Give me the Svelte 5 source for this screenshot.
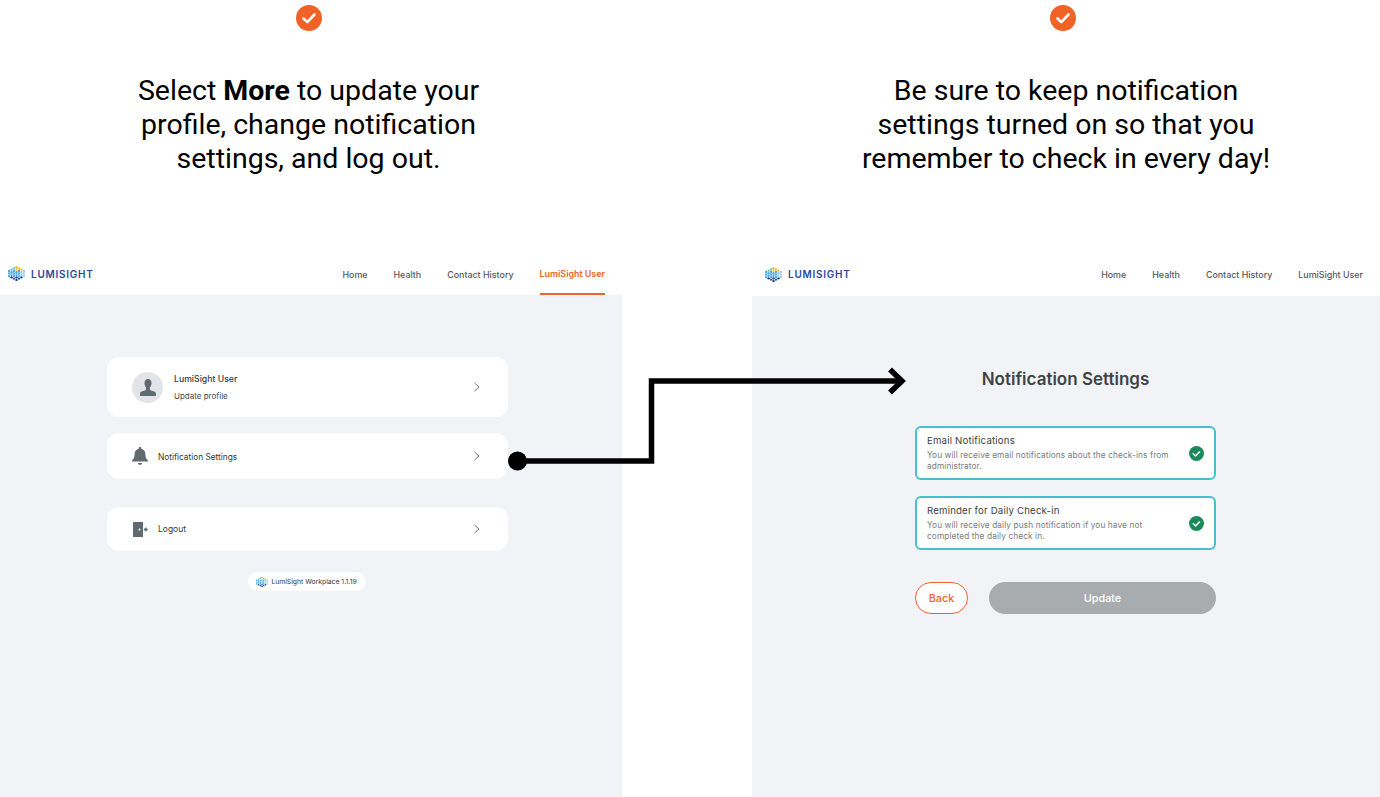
<script>
  // Two-step help slide: "More" menu on the left, notification settings on the right.
  const navLeft = ['Home', 'Health', 'Contact History', 'LumiSight User'];

  // hexagon cluster of dots for the logo mark
  const dots = [];
  for (let c = 0; c < 7; c++) {
    for (let r = 0; r < 7; r++) {
      const x = 1 + c * 2.33;
      const y = 0.8 + r * 2.4 + (c % 2) * 1.2;
      if (Math.abs(y - 8) > 8.2 - Math.abs(x - 8) * 0.55) continue;
      let fill = '#4aa8e0';
      if (y < 5 && x > 6) fill = '#f2b632';
      else if (y < 5) fill = '#6fc0b8';
      else if (y > 11) fill = c % 2 ? '#1e3f8f' : '#2d5fb0';
      else if (x > 11) fill = '#9ccdea';
      dots.push({ x, y, fill });
    }
  }
</script>

{#snippet logoMark(size)}
  <svg width={size} height={size} viewBox="0 0 16 16" aria-hidden="true">
    {#each dots as d}
      <circle cx={d.x} cy={d.y} r="1.1" fill={d.fill} />
    {/each}
  </svg>
{/snippet}

{#snippet tick()}
  <svg class="tick" width="26" height="26" viewBox="0 0 26 26" aria-hidden="true">
    <circle cx="13" cy="13" r="13" fill="#f26125" />
    <path d="M7.5 13.5l3.8 3.6 7.2-7.6" fill="none" stroke="#fff" stroke-width="2.6" stroke-linecap="round" stroke-linejoin="round" />
  </svg>
{/snippet}

{#snippet header(active)}
  <header class="bar">
    <div class="brand">{@render logoMark(17)}<span>LUMISIGHT</span></div>
    <nav>
      {#each navLeft as item}
        <span class="link" class:active={active && item === 'LumiSight User'}>{item}</span>
      {/each}
    </nav>
  </header>
{/snippet}

{#snippet chevron()}
  <svg class="chev" width="8" height="10" viewBox="0 0 8 10" aria-hidden="true">
    <path d="M1.5 1l4.500 4-4.500 4" fill="none" stroke="#6b7075" stroke-width="1" />
  </svg>
{/snippet}

{#snippet okMark()}
  <svg width="15" height="15" viewBox="0 0 14 14" aria-hidden="true">
    <circle cx="7" cy="7" r="7" fill="#1b8a5a" />
    <path d="M4 7.300l2.100 2 3.800-4" fill="none" stroke="#fff" stroke-width="1.400" stroke-linecap="round" stroke-linejoin="round" />
  </svg>
{/snippet}

<div class="slide">
  <section class="col left">
    <div class="top">
      {@render tick()}
      <p class="cap">Select <b>More</b> to update your<br />profile, change notification<br />settings, and log out.</p>
    </div>
    {@render header(true)}
    <div class="panel">
      <div class="menu">
        <div class="card profile">
          <span class="avatar">
            <svg width="16" height="17" viewBox="0 0 16 17" aria-hidden="true">
              <path d="M8 0c2.300 0 3.500 1.700 3.500 4 0 1.800-.6 3.500-1.600 4.600v1.600c0 .8 1 1.200 3 1.900 1.800.6 3 1.200 3 2.400V17H0v-2.500c0-1.200 1.200-1.800 3-2.400 2-.7 3-1.100 3-1.900V8.600C5.100 7.500 4.500 5.800 4.500 4 4.500 1.700 5.700 0 8 0z" fill="#5f6b70" />
            </svg>
          </span>
          <div class="who">
            <strong>LumiSight User</strong>
            <small>Update profile</small>
          </div>
          {@render chevron()}
        </div>
        <div class="card notif">
          <svg class="ico" width="16" height="18" viewBox="0 0 16 18" aria-hidden="true">
            <path d="M8 0c.8 0 1.300.5 1.300 1.300v.5c2.600.6 4.100 2.700 4.100 5.400 0 3.200.8 4.500 2.600 6.300v1H0v-1c1.800-1.800 2.600-3.100 2.600-6.300 0-2.700 1.500-4.800 4.100-5.400v-.5C6.700.5 7.200 0 8 0zM6 16h4c0 1.100-.9 2-2 2s-2-.9-2-2z" fill="#5f6b70" />
          </svg>
          <span class="label">Notification Settings</span>
          {@render chevron()}
        </div>
        <div class="card logout">
          <svg class="ico" width="15" height="15" viewBox="0 0 15 15" aria-hidden="true">
            <path d="M0 0h10v15H0z" fill="#5f6b70" />
            <circle cx="6.500" cy="7.500" r="1" fill="#fff" />
            <path d="M11 6.500h1.500V5L15 7.500 12.500 10V8.500H11z" fill="#5f6b70" />
          </svg>
          <span class="label">Logout</span>
          {@render chevron()}
        </div>
        <div class="pill">{@render logoMark(12)}<span>LumiSight Workplace 1.1.19</span></div>
      </div>
    </div>
  </section>

  <section class="col right">
    <div class="top">
      {@render tick()}
      <p class="cap">Be sure to keep notification<br />settings turned on so that you<br />remember to check in every day!</p>
    </div>
    {@render header(false)}
    <div class="panel">
      <h2>Notification Settings</h2>
      <div class="opts">
        <div class="opt">
          <div>
            <h3>Email Notifications</h3>
            <p>You will receive email notifications about the check-ins from administrator.</p>
          </div>
          {@render okMark()}
        </div>
        <div class="opt">
          <div>
            <h3>Reminder for Daily Check-in</h3>
            <p>You will receive daily push notification if you have not completed the daily check in.</p>
          </div>
          {@render okMark()}
        </div>
        <div class="btns">
          <span class="back">Back</span>
          <span class="update">Update</span>
        </div>
      </div>
    </div>
  </section>

  <svg class="arrow" width="1380" height="797" viewBox="0 0 1380 797" aria-hidden="true">
    <circle cx="517.500" cy="461" r="9.500" fill="#000" />
    <path d="M517 461H651.500V381H901" fill="none" stroke="#000" stroke-width="5.500" />
    <path d="M890 369.500L902 381 890 392.500" fill="none" stroke="#000" stroke-width="5.500" />
  </svg>
</div>

<style>
  :global(body) { background: #fff; }
  .slide {
    position: relative;
    width: 1380px;
    height: 797px;
    display: grid;
    grid-template-columns: 622px 628px;
    justify-content: space-between;
    overflow: hidden;
    font-family: Inter, "Liberation Sans", sans-serif;
  }
  .col { display: flex; flex-direction: column; height: 797px; }
  .top {
    height: 250px;
    display: flex;
    flex-direction: column;
    align-items: center;
    padding-top: 5px;
    box-sizing: border-box;
  }
  .left .top { width: 617px; }
  .right .top { width: 622px; }
  .right .cap { margin-left: 6px; }
  .cap {
    margin: 43px 0 0;
    font-family: Roboto, "Liberation Sans", sans-serif;
    font-size: 28.500px;
    line-height: 34px;
    text-align: center;
    color: #000;
    white-space: nowrap;
  }
  .cap b { font-weight: 700; }

  .bar {
    height: 45px;
    display: flex;
    align-items: center;
    justify-content: space-between;
    padding: 0 17px 0 8px;
    box-sizing: border-box;
  }
  .right .bar { height: 46px; padding: 0 17px 0 13px; }
  .brand { display: flex; align-items: center; gap: 6px; margin-top: 2px; }
  .brand span {
    font-size: 10px;
    font-weight: 600;
    letter-spacing: 0.75px;
    color: #2a4a9a;
  }
  nav { display: flex; gap: 26px; height: 100%; }
  .link {
    display: flex;
    align-items: center;
    font-size: 8.900px;
    font-weight: 500;
    color: #54595e;
    padding-top: 5px;
    box-sizing: border-box;
    border-bottom: 2px solid transparent;
  }
  .link.active { color: #f0642a; font-weight: 600; border-bottom-color: #f0642a; padding-top: 3px; }

  .panel { flex: 1; background: #f1f3f6; }

  .left .panel { padding: 62px 0 0 107px; }
  .menu { width: 401px; display: flex; flex-direction: column; align-items: center; }
  .card {
    width: 100%;
    box-sizing: border-box;
    background: #fff;
    border-radius: 12px;
    display: flex;
    align-items: center;
    padding: 0 27px 0 25px;
    color: #33383c;
  }
  .profile { height: 60px; margin-bottom: 16px; }
  .notif { height: 46px; margin-bottom: 28px; }
  .logout { height: 44px; margin-bottom: 21px; }
  .avatar {
    width: 31px;
    height: 31px;
    border-radius: 50%;
    background: #e2e4ea;
    display: flex;
    align-items: center;
    justify-content: center;
    margin-right: 11px;
  }
  .who { flex: 1; display: flex; flex-direction: column; gap: 7px; padding-top: 1px; }
  .who strong { font-size: 8.700px; font-weight: 500; }
  .who small { font-size: 8px; color: #44494d; }
  .ico { margin-right: 10px; flex-shrink: 0; }
  .logout .ico { margin-left: 1px; margin-right: 10px; }
  .label { flex: 1; font-size: 8.300px; }
  .notif .label { margin-top: 1px; }
  .logout .label { font-size: 8.500px; margin-top: -1px; }
  .chev { flex-shrink: 0; }
  .pill {
    width: 118px;
    height: 19px;
    border-radius: 10px;
    background: #fff;
    display: flex;
    align-items: center;
    justify-content: center;
    gap: 3px;
    font-size: 6.800px;
    color: #33383c;
    white-space: nowrap;
    transform: translateX(-1px);
  }

  .right .panel { display: flex; flex-direction: column; align-items: center; padding-right: 1px; }
  h2 {
    margin: 73px 0 0;
    font-size: 17px;
    line-height: 20px;
    font-weight: 600;
    color: #3f4347;
  }
  .opts { width: 301px; margin-top: 37px; display: flex; flex-direction: column; gap: 16px; }
  .opt {
    height: 54px;
    box-sizing: border-box;
    border: 2px solid #46bfd0;
    border-radius: 6px;
    background: #fff;
    display: flex;
    align-items: center;
    justify-content: space-between;
    padding: 0 10px;
  }
  .opt > div { width: 250px; }
  h3 { margin: 1px 0 3px; font-size: 9.600px; line-height: 12px; font-weight: 400; color: #3a3f43; letter-spacing: 0.2px; }
  .opt p { margin: 0; font-size: 8.300px; line-height: 11.500px; color: #777c80; letter-spacing: 0.1px; }
  .btns { display: flex; justify-content: space-between; margin-top: 16px; }
  .btns span {
    height: 32px;
    box-sizing: border-box;
    border-radius: 16px;
    display: flex;
    align-items: center;
    justify-content: center;
    font-size: 10.800px;
    font-weight: 500;
  }
  .back { width: 53px; border: 1.500px solid #f0642a; color: #f0642a; background: #fff; }
  .update { width: 227px; background: #a9acaf; color: #fff; font-weight: 600; }

  .arrow { position: absolute; inset: 0; pointer-events: none; }
</style>
